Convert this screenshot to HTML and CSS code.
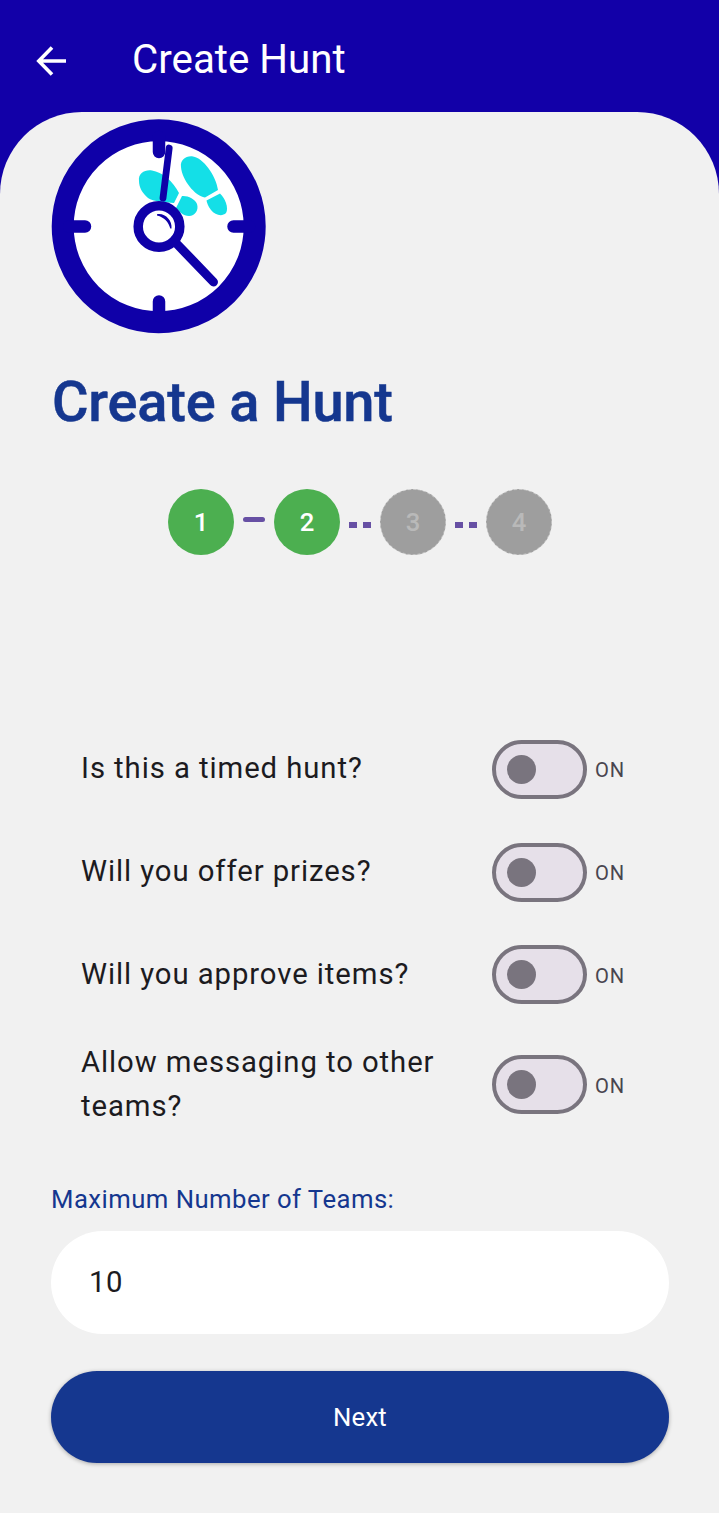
FILE: index.html
```
<!DOCTYPE html>
<html lang="en">
<head>
    <meta charset="UTF-8">
    <title>Create Hunt</title>
    <link rel="stylesheet" href="styles.css">
</head>
<body>
    <header class="app-bar">
        <svg class="back" viewBox="0 0 30 30" fill="none" stroke="#fff" stroke-width="3.6">
            <path d="M30 15H3M16 1.500L2.800 15L16 28.500"/>
        </svg>
        <span class="app-title">Create Hunt</span>
    </header>

    <main class="sheet">
        <svg class="logo" viewBox="0 0 216 216">
            <circle cx="107.700" cy="107.300" r="96" fill="#fff" stroke="#0f00a8" stroke-width="22"/>
            <!-- footprints -->
            <g fill="#14dfe7">
                <path d="M88 62C87 54 94 50.500 101 51.500C111 53 122 62 128 74L123 84C115 83 102 83 97 79C91 74 88 68 88 62Z"/>
                <path d="M131 77C137 76.500 144 80 146 85C148 91 144 97 138 97C132 97 129 93 125 89Z"/>
                <path d="M130 48C129 41 135 36.500 142 37.500C152 39 165 56 167 71L154 78.500C144 77 131 61 130 48Z"/>
                <path d="M169 74.500C174 79 178 89 175 94C171 98 164 96 160 91C157 87 156 84 155.500 81.500Z"/>
            </g>
            <g stroke="#0f00a8" stroke-linecap="round" fill="none">
                <path stroke-width="12.500" d="M108 18V33M108 197V182.500M18 107.500H34M198 107.500H182.500"/>
                <path stroke-width="6.800" d="M118.200 29L112 79"/>
                <path stroke-width="9" d="M125 124L162.500 163"/>
            </g>
            <circle cx="108" cy="107.500" r="20.800" fill="#fff" stroke="#0f00a8" stroke-width="9.500"/>
            <path d="M106 95.200C113.500 93.500 121.500 101 120.500 109.500H119.300C117.500 103 113.500 98.500 106 96.500Z" fill="#0f00a8"/>
        </svg>

        <h1>Create a Hunt</h1>

        <div class="steps">
            <span class="step">1</span>
            <span class="line"></span>
            <span class="step">2</span>
            <span class="dots"><i></i><i></i></span>
            <span class="step off">3</span>
            <span class="dots"><i></i><i></i></span>
            <span class="step off">4</span>
        </div>

        <div class="options">
            <div class="option">
                <span class="question">Is this a timed hunt?</span>
                <span class="switch"></span>
                <span class="state">ON</span>
            </div>
            <div class="option">
                <span class="question">Will you offer prizes?</span>
                <span class="switch"></span>
                <span class="state">ON</span>
            </div>
            <div class="option">
                <span class="question">Will you approve items?</span>
                <span class="switch"></span>
                <span class="state">ON</span>
            </div>
            <div class="option tall">
                <span class="question">Allow messaging to other teams?</span>
                <span class="switch"></span>
                <span class="state">ON</span>
            </div>
        </div>

        <label for="teams">Maximum Number of Teams:</label>
        <input type="text" id="teams" value="10">
        <button>Next</button>
    </main>
</body>
</html>
```
FILE: styles.css
```
* {
    box-sizing: border-box;
}

body {
    margin: 0;
    background-color: #1200a8;
    font-family: Roboto, sans-serif;
    color: #1c1b1f;
}

.app-bar {
    display: flex;
    align-items: center;
    height: 112px;
    padding: 9px 36px 0;
}

.back {
    width: 30px;
    height: 30px;
}

.app-title {
    margin-left: 66px;
    padding-bottom: 2px;
    color: #fff;
    font-size: 40.3px;
    line-height: 52px;
}

.sheet {
    display: flex;
    flex-direction: column;
    height: 1401px;
    padding: 7px 50px 0 51px;
    background-color: #f1f1f1;
    border-radius: 82px 82px 0 0;
}

.logo {
    width: 216px;
    height: 216px;
}

h1 {
    margin: 33px 0 0;
    padding-left: 1px;
    color: #15378f;
    font-size: 56px;
    font-weight: 500;
    letter-spacing: -0.2px;
    line-height: 69px;
    -webkit-text-stroke: 0.5px #15378f;
}

.steps {
    display: flex;
    justify-content: center;
    align-items: center;
    margin-top: 52px;
}

.step {
    width: 66px;
    height: 66px;
    border-radius: 50%;
    background-color: #4caf50;
    color: #fff;
    font-size: 25.7px;
    font-weight: 500;
    line-height: 67px;
    text-align: center;
}

.step.off {
    border: 1px dashed #bdbdbd;
    background-color: #9e9e9e;
    color: #b9b9b9;
    line-height: 65px;
}

.line {
    width: 22px;
    height: 5px;
    margin: 0 9px;
    margin-bottom: 5px;
    border-radius: 3px;
    background-color: #6750a4;
}

.dots {
    display: flex;
    justify-content: space-between;
    width: 22px;
    margin: 5px 9px 0;
}

.dots i {
    width: 8px;
    height: 6px;
    background-color: #6750a4;
}

.options {
    margin-top: 163px;
    padding-left: 30px;
}

.option {
    display: flex;
    align-items: center;
    height: 102.7px;
}

.option.tall {
    height: 117px;
}

.question {
    width: 411px;
    padding: 0 40px 2px 0;
    font-size: 29.3px;
    letter-spacing: 0.92px;
    line-height: 44px;
}

.switch {
    width: 95px;
    height: 59px;
    padding: 11px;
    border: 4px solid #79747e;
    border-radius: 30px;
    background-color: #e6e0e9;
}

.switch::before {
    content: "";
    display: block;
    width: 29px;
    height: 29px;
    border-radius: 50%;
    background-color: #79747e;
}

.state {
    margin-left: 8px;
    padding-top: 2px;
    color: #49454f;
    font-size: 20.2px;
    letter-spacing: 0.92px;
}

label {
    margin-top: 38px;
    color: #15378f;
    font-size: 25.7px;
    letter-spacing: 0.46px;
    line-height: 37px;
}

input {
    height: 103px;
    margin-top: 13px;
    padding: 0 38px 2px;
    border: none;
    border-radius: 52px;
    background-color: #fff;
    color: #1c1b1f;
    font-family: inherit;
    font-size: 29.3px;
    letter-spacing: 0.5px;
}

button {
    height: 92px;
    margin-top: 37px;
    border: none;
    border-radius: 46px;
    background-color: #15378f;
    box-shadow: 0 1px 4px rgba(0, 0, 0, 0.3);
    color: #fff;
    font-family: inherit;
    font-size: 25.7px;
    letter-spacing: 0.2px;
}
```
